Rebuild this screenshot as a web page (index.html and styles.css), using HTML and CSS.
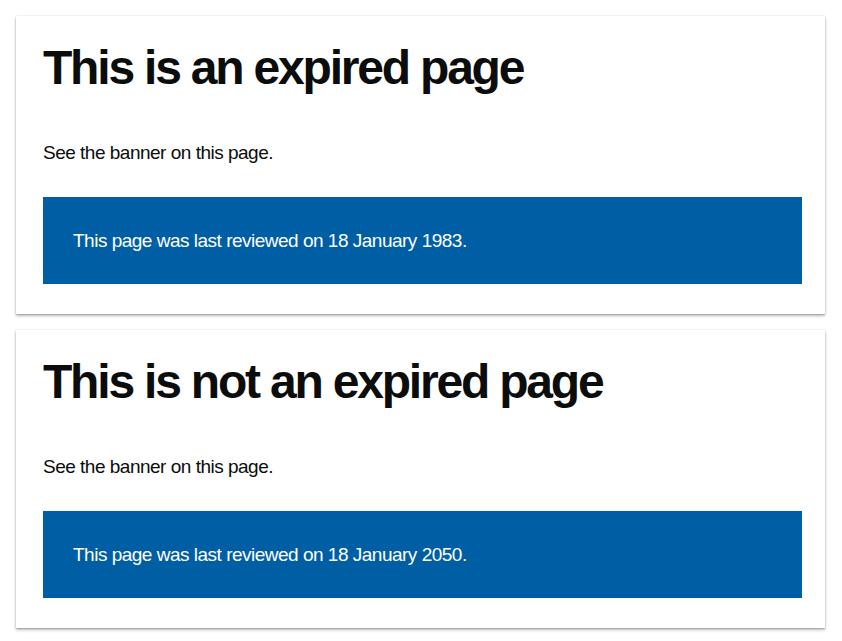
FILE: index.html
```html
<!DOCTYPE html>
<html lang="en">
<head>
<meta charset="utf-8">
<title>Expired page</title>
<link rel="stylesheet" href="styles.css">
</head>
<body>
<main class="stack">
  <section class="card">
    <h1 class="title">This is an expired page</h1>
    <p class="body">See the banner on this page.</p>
    <div class="banner">This page was last reviewed on 18 January 1983.</div>
  </section>
  <section class="card">
    <h1 class="title">This is not an expired page</h1>
    <p class="body">See the banner on this page.</p>
    <div class="banner">This page was last reviewed on 18 January 2050.</div>
  </section>
</main>
</body>
</html>
```
FILE: styles.css
```css
html, body {
  margin: 0;
  padding: 0;
  background: #ffffff;
}
body {
  font-family: "Liberation Sans", Arial, sans-serif;
  color: #0b0c0c;
}
.stack {
  display: flex;
  flex-direction: column;
  gap: 16px;
  padding: 16px 17px 12px 16px;
}
.card {
  background: #ffffff;
  box-shadow: 0 1px 1px rgba(0,0,0,0.12), 0 2px 3px rgba(0,0,0,0.25), 0 0 2px rgba(0,0,0,0.12);
  padding: 27px 23px 30px 27px;
}
.title {
  margin: 0 0 47px 0;
  font-size: 48px;
  line-height: 50px;
  font-weight: 700;
  letter-spacing: -2.2px;
}
.body {
  margin: 0 0 32px 0;
  font-size: 19px;
  line-height: 25px;
  letter-spacing: -0.5px;
}
.banner {
  background: #005ea5;
  color: #ffffff;
  font-size: 19px;
  line-height: 25px;
  letter-spacing: -0.5px;
  padding: 31px 30px 31px 30px;
}
```
